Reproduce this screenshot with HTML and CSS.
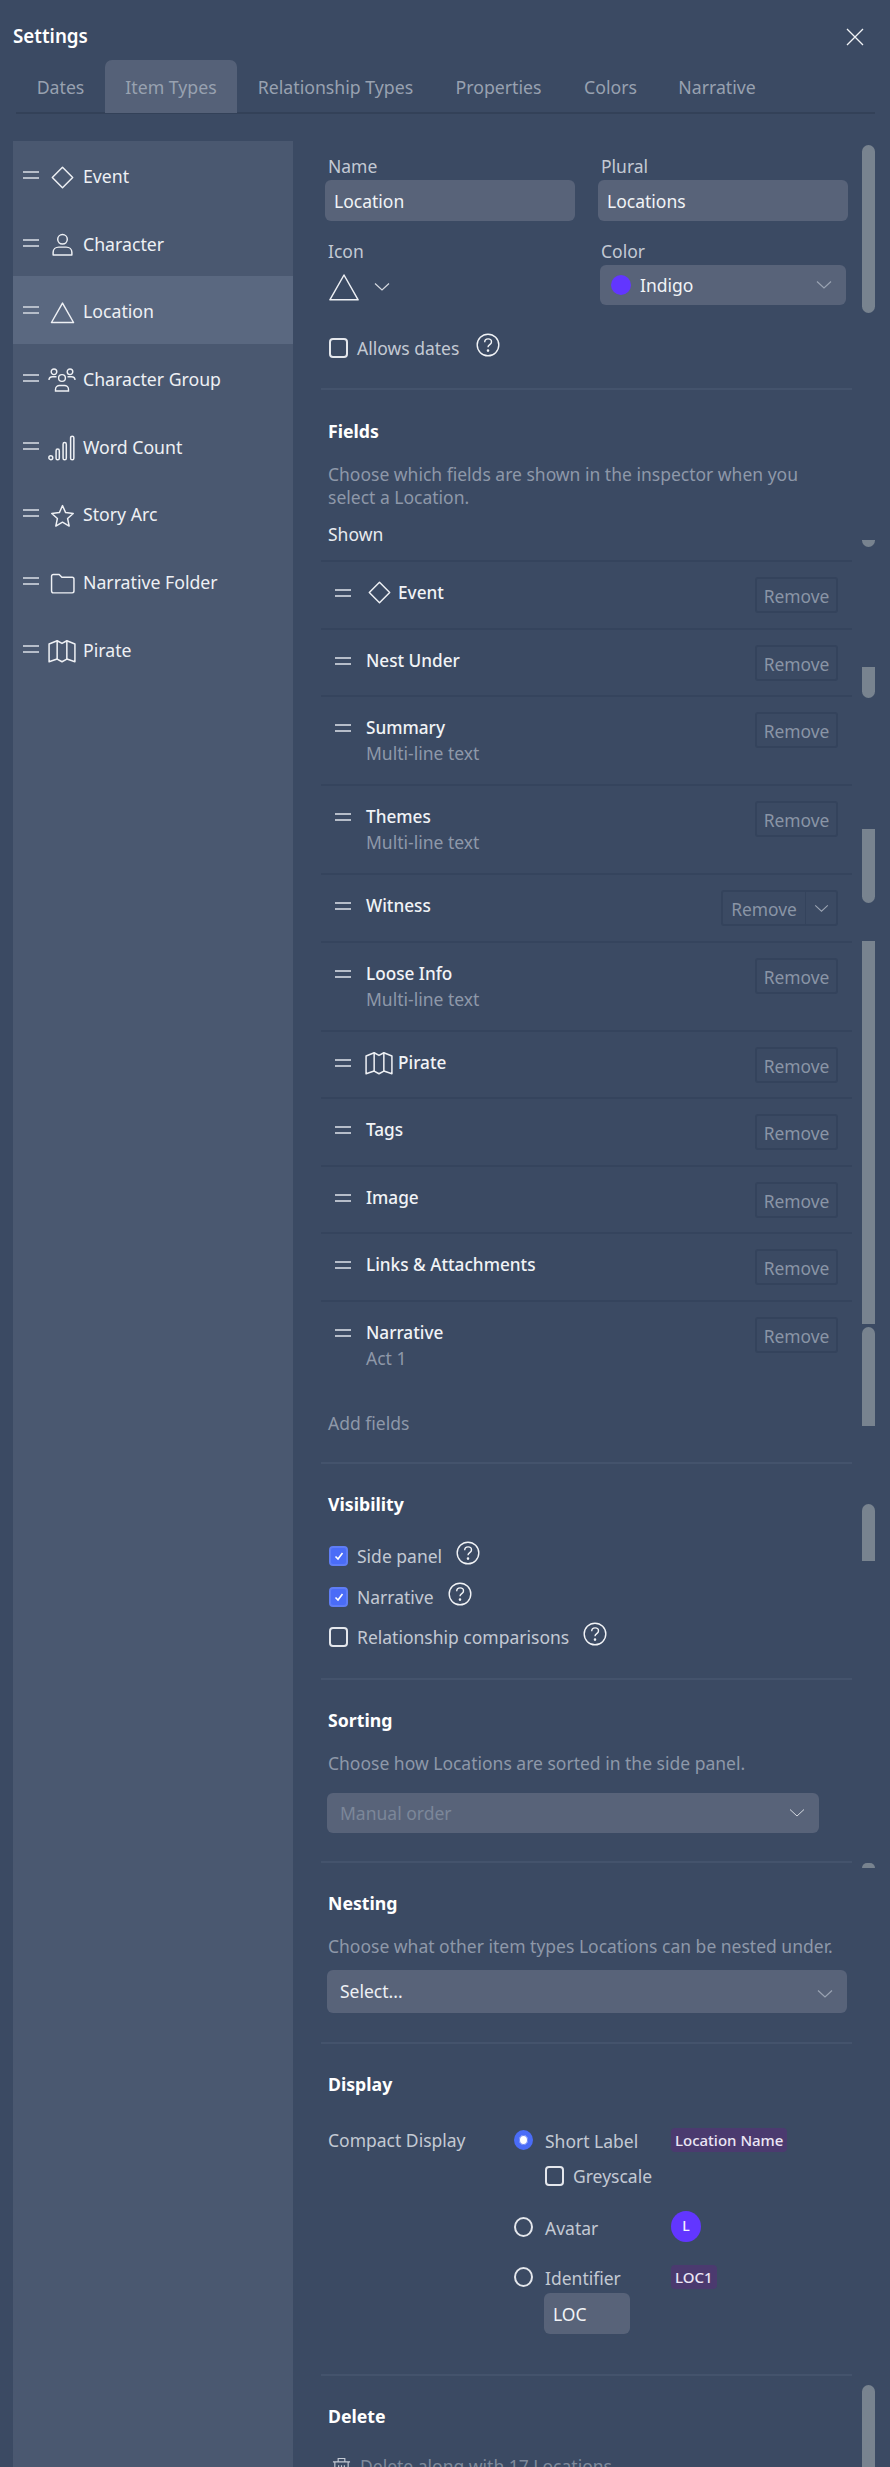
FILE: index.html
```html
<!DOCTYPE html>
<html lang="en">
<head>
<meta charset="utf-8">
<title>Settings</title>
<link rel="stylesheet" href="styles.css">
</head>
<body>
<svg class="sprite" width="0" height="0" aria-hidden="true">
  <defs>
    <symbol id="i-diamond" viewBox="0 0 24 24"><path d="M12 2.2 21.8 12 12 21.8 2.2 12Z" stroke-linejoin="round"/></symbol>
    <symbol id="i-person" viewBox="0 0 24 24"><circle cx="12" cy="7" r="4.6"/><path d="M3 22v-2.5c0-3 2.5-5 5.5-5h7c3 0 5.5 2 5.5 5V22Z" stroke-linejoin="round"/></symbol>
    <symbol id="i-triangle" viewBox="0 0 24 24"><path d="M12 3 22.6 21.6H1.4Z" stroke-linejoin="round"/></symbol>
    <symbol id="i-group" viewBox="0 0 28 24"><circle cx="14" cy="10" r="3.4"/><path d="M7.5 23v-1.5c0-2.5 2-4 4-4h5c2 0 4 1.500 4 4V23Z"/><circle cx="6" cy="3.800" r="2.800"/><circle cx="22" cy="3.800" r="2.800"/><path d="M1 12c0-2 1.500-3.200 3.500-3.200h4M27 12c0-2-1.500-3.200-3.500-3.200h-4"/></symbol>
    <symbol id="i-bars" viewBox="0 0 26 24"><circle cx="2.600" cy="21" r="1.800"/><rect x="7.500" y="13" width="3" height="10" rx="1.500"/><rect x="14" y="7" width="3" height="16" rx="1.500"/><rect x="21" y="1" width="3" height="22" rx="1.500"/></symbol>
    <symbol id="i-star" viewBox="0 0 24 24"><path d="M12 2.500 15 9.200l7.300.8-5.400 4.900 1.500 7.200L12 18.400l-6.400 3.700 1.500-7.200L1.700 10 9 9.200Z" stroke-linejoin="round"/></symbol>
    <symbol id="i-folder" viewBox="0 0 24 24"><path d="M1.500 5c0-1 .7-1.700 1.700-1.700h5.600l2.600 2.700h9.900c1 0 1.700.7 1.700 1.700v11.600c0 1-.7 1.700-1.700 1.700H3.200c-1 0-1.700-.7-1.700-1.700Z" stroke-linejoin="round"/></symbol>
    <symbol id="i-map" viewBox="0 0 26 24"><path d="M1 5.500 8.500 2.500 13 5 17.500 2.500 25 5.500V22l-7.500-2.500L13 22l-4.500-2.500L1 22Z" stroke-linejoin="round"/><path d="M8.500 2.500v17M17.500 2.500v17"/></symbol>
    <symbol id="i-chev" viewBox="0 0 16 10"><path d="M1 1.500 8 8l7-6.500"/></symbol>
    <symbol id="i-help" viewBox="0 0 24 24"><circle cx="12" cy="12" r="10.800"/><path d="M8.700 9.200c0-2 1.500-3.300 3.400-3.300s3.400 1.200 3.400 3c0 2.700-3.500 2.700-3.500 5.400"/><circle cx="12" cy="17.600" r=".6"/></symbol>
    <symbol id="i-trash" viewBox="0 0 20 24"><path d="M1 5.500h18M3 5.500V23h14V5.500M6.500 5.500V2h7v3.500M7 9v11M10 9v11M13 9v11"/></symbol>
  </defs>
</svg>
<div class="dialog">
  <header class="title-bar">
    <h1 class="title">Settings</h1>
    <button class="close" type="button" aria-label="Close"><svg viewBox="0 0 18 18" class="close-icon"><path d="M1 1l16 16M17 1 1 17"/></svg></button>
  </header>
  <nav class="tabs">
    <span class="tab t-dates">Dates</span>
    <span class="tab t-items active">Item Types</span>
    <span class="tab t-rel">Relationship Types</span>
    <span class="tab t-props">Properties</span>
    <span class="tab t-colors">Colors</span>
    <span class="tab t-narr">Narrative</span>
  </nav>
  <main class="body">
    <aside class="sidebar">
      <div class="side-item"><i class="handle"></i><span class="side-icon"><svg class="ico ico-22"><use href="#i-diamond"/></svg></span><span>Event</span></div>
      <div class="side-item"><i class="handle"></i><span class="side-icon"><svg class="ico ico-22"><use href="#i-person"/></svg></span><span>Character</span></div>
      <div class="side-item selected"><i class="handle"></i><span class="side-icon"><svg class="ico ico-22"><use href="#i-triangle"/></svg></span><span>Location</span></div>
      <div class="side-item"><i class="handle"></i><span class="side-icon"><svg class="ico ico-wide"><use href="#i-group"/></svg></span><span>Character Group</span></div>
      <div class="side-item"><i class="handle"></i><span class="side-icon"><svg class="ico ico-wide"><use href="#i-bars"/></svg></span><span>Word Count</span></div>
      <div class="side-item"><i class="handle"></i><span class="side-icon"><svg class="ico ico-22"><use href="#i-star"/></svg></span><span>Story Arc</span></div>
      <div class="side-item"><i class="handle"></i><span class="side-icon"><svg class="ico ico-22"><use href="#i-folder"/></svg></span><span>Narrative Folder</span></div>
      <div class="side-item"><i class="handle"></i><span class="side-icon"><svg class="ico ico-wide"><use href="#i-map"/></svg></span><span>Pirate</span></div>
    </aside>
    <div class="content">
      <section class="sec sec-general">
        <div class="form-grid">
          <label class="field"><span class="label">Name</span><span class="input">Location</span></label>
          <label class="field"><span class="label">Plural</span><span class="input">Locations</span></label>
          <div class="field field-low"><span class="label">Icon</span><span class="icon-pick"><svg class="ico ico-tri"><use href="#i-triangle"/></svg><svg class="chev chev-light"><use href="#i-chev"/></svg></span></div>
          <div class="field field-low"><span class="label">Color</span><span class="color-select"><i class="dot"></i><span class="color-name">Indigo</span><svg class="chev"><use href="#i-chev"/></svg></span></div>
        </div>
        <div class="check-row allows"><i class="box"></i><span>Allows dates</span><svg class="help help-allows"><use href="#i-help"/></svg></div>
      </section>

      <section class="sec sec-fields">
        <h2 class="h2">Fields</h2>
        <p class="desc desc-fields">Choose which fields are shown in the inspector when you select a Location.</p>
        <div class="shown">Shown</div>
        <div class="rows">
          <div class="row"><i class="handle"></i><svg class="ico ico-22 row-icon"><use href="#i-diamond"/></svg><div class="row-text"><div class="name">Event</div></div><button class="remove" type="button">Remove</button></div>
          <div class="row"><i class="handle"></i><div class="row-text"><div class="name">Nest Under</div></div><button class="remove" type="button">Remove</button></div>
          <div class="row tall"><i class="handle"></i><div class="row-text"><div class="name">Summary</div><div class="sub">Multi-line text</div></div><button class="remove" type="button">Remove</button></div>
          <div class="row tall"><i class="handle"></i><div class="row-text"><div class="name">Themes</div><div class="sub">Multi-line text</div></div><button class="remove" type="button">Remove</button></div>
          <div class="row"><i class="handle"></i><div class="row-text"><div class="name">Witness</div></div><div class="remove remove-split"><span class="split-label">Remove</span><span class="split-chev"><svg class="chev chev-split"><use href="#i-chev"/></svg></span></div></div>
          <div class="row tall"><i class="handle"></i><div class="row-text"><div class="name">Loose Info</div><div class="sub">Multi-line text</div></div><button class="remove" type="button">Remove</button></div>
          <div class="row"><i class="handle"></i><svg class="ico ico-wide row-icon map-icon"><use href="#i-map"/></svg><div class="row-text"><div class="name">Pirate</div></div><button class="remove" type="button">Remove</button></div>
          <div class="row"><i class="handle"></i><div class="row-text"><div class="name">Tags</div></div><button class="remove" type="button">Remove</button></div>
          <div class="row"><i class="handle"></i><div class="row-text"><div class="name">Image</div></div><button class="remove" type="button">Remove</button></div>
          <div class="row"><i class="handle"></i><div class="row-text"><div class="name">Links &amp; Attachments</div></div><button class="remove" type="button">Remove</button></div>
          <div class="row tall"><i class="handle"></i><div class="row-text"><div class="name">Narrative</div><div class="sub">Act 1</div></div><button class="remove" type="button">Remove</button></div>
        </div>
        <div class="add-fields">Add fields</div>
      </section>

      <section class="sec sec-visibility">
        <h2 class="h2">Visibility</h2>
        <div class="checks">
          <div class="check-row"><i class="box on"><svg viewBox="0 0 12 12" class="tick"><path d="M2.500 6.500 5 9l4.500-6"/></svg></i><span>Side panel</span><svg class="help"><use href="#i-help"/></svg></div>
          <div class="check-row"><i class="box on"><svg viewBox="0 0 12 12" class="tick"><path d="M2.500 6.500 5 9l4.500-6"/></svg></i><span>Narrative</span><svg class="help"><use href="#i-help"/></svg></div>
          <div class="check-row"><i class="box"></i><span>Relationship comparisons</span><svg class="help"><use href="#i-help"/></svg></div>
        </div>
      </section>

      <section class="sec sec-sorting">
        <h2 class="h2">Sorting</h2>
        <p class="desc">Choose how Locations are sorted in the side panel.</p>
        <div class="select select-disabled"><span>Manual order</span><svg class="chev chev-light"><use href="#i-chev"/></svg></div>
      </section>

      <section class="sec sec-nesting">
        <h2 class="h2">Nesting</h2>
        <p class="desc">Choose what other item types Locations can be nested under.</p>
        <div class="select select-open"><span>Select...</span><svg class="chev"><use href="#i-chev"/></svg></div>
      </section>

      <section class="sec sec-display">
        <h2 class="h2">Display</h2>
        <div class="display-grid">
          <div class="compact-label">Compact Display</div>
          <div class="options">
            <div class="option opt-short"><i class="radio on"></i><span class="opt-name">Short Label</span><span class="tag">Location Name</span></div>
            <div class="check-row greyscale"><i class="box"></i><span>Greyscale</span></div>
            <div class="option opt-avatar"><i class="radio"></i><span class="opt-name">Avatar</span><span class="avatar">L</span></div>
            <div class="option opt-ident"><i class="radio"></i><span class="opt-name">Identifier</span><span class="tag">LOC1</span></div>
            <div class="input input-loc">LOC</div>
          </div>
        </div>
      </section>

      <section class="sec sec-delete">
        <h2 class="h2">Delete</h2>
        <div class="delete-row"><svg class="trash"><use href="#i-trash"/></svg><span>Delete along with 17 Locations</span></div>
      </section>
    </div>
  </main>
</div>
<div class="scroll-pieces" aria-hidden="true">
  <i class="piece p1"></i><i class="piece p2"></i><i class="piece p3"></i><i class="piece p4"></i><i class="piece p5"></i><i class="piece p6"></i><i class="piece p7"></i><i class="piece p8"></i><i class="piece p9"></i>
</div>
</body>
</html>
```
FILE: styles.css
```css
* { box-sizing: border-box; }
html, body { margin: 0; padding: 0; }
body {
  position: relative;
  width: 890px;
  height: 2467px;
  overflow: hidden;
  background: #3b4a63;
  color: #f1f3f6;
  font-family: "Noto Sans", "DejaVu Sans", sans-serif;
  font-size: 17.5px;
  line-height: 20px;
}
.sprite { position: absolute; }
h1, h2, p { margin: 0; }
button { font: inherit; }
svg { display: block; fill: none; stroke: currentColor; stroke-width: 1.3; }
i { display: block; font-style: normal; }

.title-bar { display: flex; justify-content: space-between; align-items: center; height: 60px; padding: 12px 26px 0 13px; }
.title { font-size: 18.8px; font-weight: 600; color: #fff; }
.close { display: block; padding: 1px 0 0; border: 0; background: none; color: #f1f3f6; }
.close-icon { width: 18px; height: 18px; }

.tabs { display: flex; height: 54px; margin: 0 15px 0 16px; border-bottom: 2px solid #334158; }
.tab { display: flex; align-items: center; justify-content: center; height: 53px; color: #98a1b0; font-size: 17.7px; }
.tab.active { background: #556178; border-radius: 7px 7px 0 0; }
.t-dates { width: 89px; }
.t-items { width: 132px; }
.t-rel { width: 197px; }
.t-props { width: 129px; }
.t-colors { width: 95px; }
.t-narr { width: 118px; }

.body { display: flex; gap: 28px; padding: 27px 0 0 13px; }
.sidebar { flex: none; width: 280px; height: 2360px; background: #4a5870; }
.side-item { display: flex; align-items: flex-start; height: 67.7px; padding: 25px 0 0 10px; color: #eef0f4; font-size: 17.7px; }
.side-item.selected { background: #5a6880; }
.handle { flex: none; width: 16px; height: 8px; margin-top: 5px; border-top: 2px solid #b6bdc9; border-bottom: 2px solid #b6bdc9; }
.side-icon { flex: none; display: flex; justify-content: center; width: 44px; height: 22px; padding: 0 0 0 2px; }
.ico { flex: none; color: #eef0f4; stroke-width: 1.4; }
.ico-22 { width: 25px; height: 25px; margin: -1.500px -1.500px; }
.ico-wide { width: 28px; height: 26px; margin: -2px -1px; }
.ico-tri { width: 32px; height: 32px; margin: 3px -2px 0; stroke-width: 1.1; }

.content { flex: none; width: 531px; }
.sec { border-bottom: 2px solid #44536c; }
.sec-delete { border-bottom: 0; }
.h2 { padding-left: 7px; font-size: 17.7px; line-height: 20px; font-weight: 700; color: #fff; }
.desc { padding: 0 40px 0 7px; color: #8e98a9; font-size: 17.5px; line-height: 23px; }

.sec-general { height: 249px; padding-top: 15px; }
.form-grid { display: grid; grid-template-columns: 250px 250px; column-gap: 23px; margin-left: 4px; }
.field { display: block; }
.field-low { margin-top: 20px; }
.label { display: block; height: 24px; padding-left: 3px; color: #c3c9d3; line-height: 20px; }
.input { display: block; height: 41px; padding: 0 9px; background: #586379; border-radius: 6px; color: #f1f3f6; line-height: 42px; }
.icon-pick { display: flex; align-items: center; gap: 16px; height: 40px; padding-left: 5px; }
.icon-pick .chev { margin-top: 4px; }
.chev { flex: none; width: 16px; height: 10px; color: #9aa3b2; stroke-width: 1.2; }
.chev-light { color: #d5d9e0; }
.color-select { display: flex; align-items: center; height: 40px; margin: 0 2px; padding: 0 14px 0 11px; background: #586379; border-radius: 6px; }
.dot { width: 20px; height: 20px; border-radius: 50%; background: #6236ff; }
.color-name { flex: 1; padding-left: 9px; }
.check-row { display: flex; align-items: center; color: #c3c9d3; }
.box { flex: none; display: flex; align-items: center; justify-content: center; width: 19px; height: 20px; margin-right: 9px; border: 2px solid #e4e7ec; border-radius: 4px; }
.box.on { background: #4a6cf7; border-color: #5f7df6; }
.tick { width: 12px; height: 12px; color: #fff; stroke-width: 1.6; }
.allows { height: 20px; margin: 33px 0 0 8px; }
.help { flex: none; width: 24px; height: 24px; margin: -6px 0 0 14px; color: #f1f3f6; stroke-width: 1.4; }
.help-allows { margin-left: 17px; }

.sec-fields { height: 1074px; padding-top: 31px; }
.desc-fields { margin-top: 22px; }
.shown { margin-top: 15px; padding-left: 7px; color: #e8ebef; }
.rows { margin-top: 16px; }
.row { display: flex; align-items: flex-start; height: 67.5px; padding: 16px 14px 0 14px; border-top: 2px solid #35445d; }
.row.tall { height: 89px; }
.row .handle { margin-top: 11px; }
.row-text { flex: 1; padding: 5px 0 0 15px; }
.row-icon { flex: none; margin: 1.500px -8.500px 0 15.500px; }
.map-icon { margin: 2px -10px 0 14px; }
.name { color: #f1f3f6; font-size: 17.2px; font-weight: 500; line-height: 20px; }
.sub { margin-top: 5px; color: #8e98a9; }
.remove { flex: none; display: block; width: 83px; height: 36px; margin-top: -1px; padding: 0; background: none; border: 2px solid #34435c; border-radius: 3px; color: #8a95a6; font-size: 17.4px; text-align: center; line-height: 35px; }
.remove-split { display: flex; width: 117px; }
.split-label { flex: none; width: 82px; }
.split-chev { flex: 1; display: flex; align-items: center; justify-content: center; border-left: 1px solid #34435c; }
.chev-split { width: 15px; height: 9px; }
.add-fields { margin-top: 24px; padding-left: 7px; color: #8e98a9; }

.sec-visibility { height: 216px; padding-top: 30px; }
.checks { margin: 32px 0 0 8px; }
.checks .check-row { height: 20px; margin-bottom: 20.500px; }

.sec-sorting { height: 183px; padding-top: 30px; }
.sec-sorting .desc { margin-top: 22px; padding-right: 0; }
.select { display: flex; align-items: center; justify-content: space-between; margin: 18px 0 0 6px; padding: 0 14px 0 13px; background: #586379; border-radius: 6px; }
.select-disabled { width: 492px; height: 40px; color: #7c8799; }
.select-disabled .chev { stroke-width: 1; }
.sec-nesting { height: 181px; padding-top: 30px; }
.sec-nesting .desc { margin-top: 22px; padding-right: 0; }
.select-open { width: 520px; height: 43px; margin-top: 12px; padding-bottom: 2px; color: #eef0f4; }
.select-open .chev { margin-top: 6px; }

.sec-display { height: 332px; padding-top: 30px; }
.display-grid { display: flex; margin-top: 36px; }
.compact-label { flex: none; width: 193px; padding-left: 7px; color: #c3c9d3; }
.options { flex: 1; margin-top: -2px; }
.option { display: flex; align-items: center; height: 24px; color: #c3c9d3; }
.radio { flex: none; width: 19px; height: 20px; margin-right: 12px; border: 2px solid #e4e7ec; border-radius: 50%; }
.radio.on { background: #fff; border: 5px solid #4a6cf7; box-shadow: 0 0 0 1px #6d86f5 inset; }
.opt-name { flex: none; width: 126px; padding-top: 2px; }
.tag { padding: 0 4px; height: 24px; background: #4b3a6f; border-radius: 4px; color: #ebe6f5; font-size: 15px; font-weight: 500; line-height: 24px; }
.greyscale { height: 20px; margin: 14px 0 0 31px; }
.opt-avatar { margin-top: 28.5px; }
.avatar { width: 30px; height: 31px; border-radius: 50%; background: #6236ff; color: #f4f1ff; font-size: 14px; text-align: center; line-height: 30px; font-weight: 500; }
.opt-ident { margin-top: 26.5px; }
.input-loc { width: 86px; margin: 4px 0 0 30px; padding: 0 9px; }

.sec-delete { padding-top: 30px; }
.delete-row { display: flex; align-items: flex-start; gap: 9px; margin: 30px 0 0 11px; color: #7f8a9b; }
.trash { width: 19px; height: 24px; flex: none; stroke-width: 1.2; color: #c3c9d3; }

.scroll-pieces { position: absolute; left: 862px; top: 0; width: 13px; height: 2467px; pointer-events: none; }
.piece { position: absolute; left: 0; width: 13px; background: #78838f; }
.p1 { top: 145px; height: 168px; border-radius: 7px; }
.p2 { top: 540px; height: 7px; border-radius: 0 0 7px 7px; }
.p3 { top: 667px; height: 31px; border-radius: 0 0 7px 7px; }
.p4 { top: 829px; height: 74px; border-radius: 0 0 7px 7px; }
.p5 { top: 941px; height: 383px; }
.p6 { top: 1327px; height: 99px; border-radius: 7px 7px 0 0; }
.p7 { top: 1504px; height: 57px; border-radius: 7px 7px 0 0; }
.p8 { top: 1863px; height: 5px; border-radius: 7px 7px 0 0; }
.p9 { top: 2385px; height: 82px; border-radius: 7px 7px 0 0; }
```
